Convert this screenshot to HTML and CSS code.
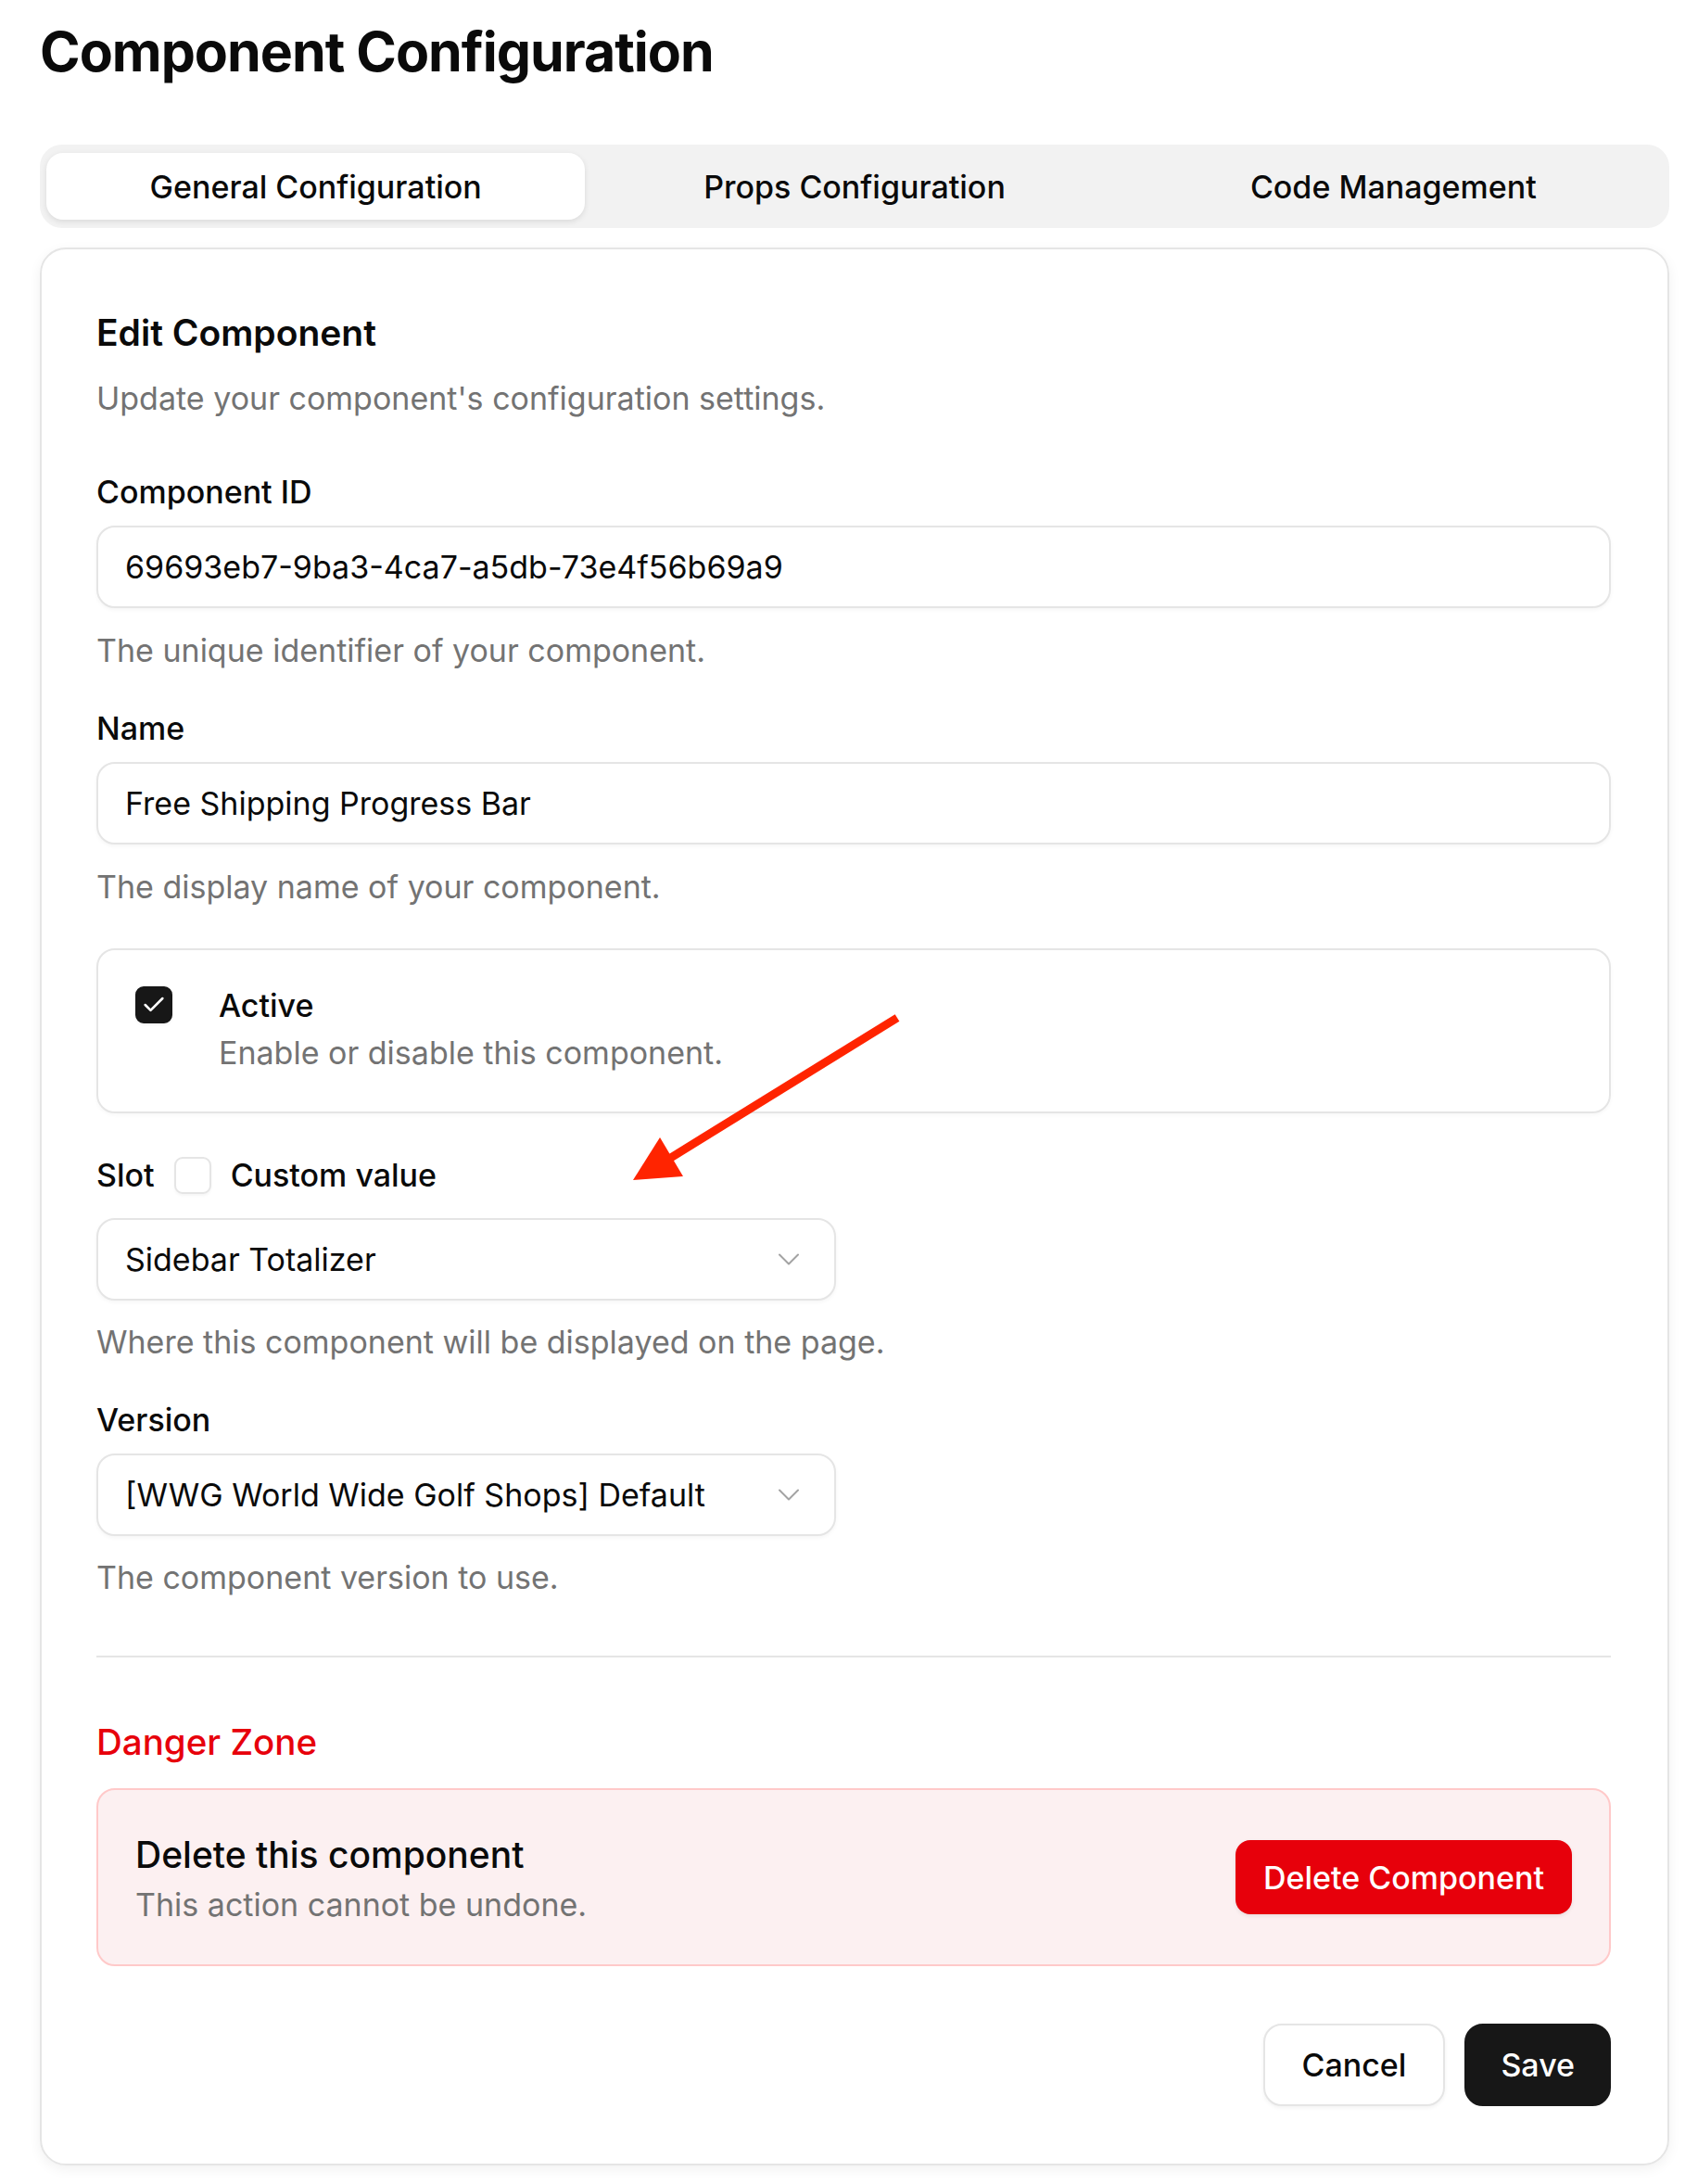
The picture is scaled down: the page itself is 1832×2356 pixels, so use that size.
FILE: index.html
```html
<!DOCTYPE html>
<html lang="en">
<head>
<meta charset="UTF-8">
<meta name="viewport" content="width=device-width, initial-scale=1.0">
<title>Component Configuration</title>
<link rel="stylesheet" href="styles.css">
</head>
<body>
<div class="page">
  <h1 class="title">Component Configuration</h1>

  <div class="tabs">
    <button type="button" class="tab active">General Configuration</button>
    <button type="button" class="tab">Props Configuration</button>
    <button type="button" class="tab">Code Management</button>
  </div>

  <div class="card">
    <!-- annotation arrow drawn over the form -->
    <svg class="annotation" width="320" height="210" viewBox="0 0 320 210">
      <line x1="298" y1="13" x2="52" y2="165" stroke="#ff2400" stroke-width="9" />
      <polygon points="13,188 42,142 67,184" fill="#ff2400" />
    </svg>

    <h2 class="card-title">Edit Component</h2>
    <p class="card-desc">Update your component's configuration settings.</p>

    <div class="field first">
      <label class="label">Component ID</label>
      <input class="input" type="text" value="69693eb7-9ba3-4ca7-a5db-73e4f56b69a9" readonly>
      <p class="help">The unique identifier of your component.</p>
    </div>

    <div class="field">
      <label class="label">Name</label>
      <input class="input" type="text" value="Free Shipping Progress Bar" readonly>
      <p class="help">The display name of your component.</p>
    </div>

    <div class="toggle-box">
      <span class="checkbox checked">
        <svg width="28" height="28" viewBox="0 0 24 24" fill="none" stroke="#fff" stroke-width="2.2" stroke-linecap="round" stroke-linejoin="round"><path d="M20 6 9 17l-5-5"/></svg>
      </span>
      <div>
        <div class="toggle-label">Active</div>
        <div class="toggle-desc">Enable or disable this component.</div>
      </div>
    </div>

    <div class="field slot">
      <div class="slot-row">
        <label class="label inline">Slot</label>
        <span class="checkbox"></span>
        <span class="label inline">Custom value</span>
      </div>
      <button type="button" class="select">
        <span>Sidebar Totalizer</span>
        <svg width="22" height="13" viewBox="0 0 22 13" fill="none" stroke="#a3a3a3" stroke-width="2" stroke-linecap="round" stroke-linejoin="round"><path d="M1 1.5l10 10 10-10"/></svg>
      </button>
      <p class="help short">Where this component will be displayed on the page.</p>
    </div>

    <div class="field">
      <label class="label">Version</label>
      <button type="button" class="select">
        <span>[WWG World Wide Golf Shops] Default</span>
        <svg width="22" height="13" viewBox="0 0 22 13" fill="none" stroke="#a3a3a3" stroke-width="2" stroke-linecap="round" stroke-linejoin="round"><path d="M1 1.5l10 10 10-10"/></svg>
      </button>
      <p class="help short">The component version to use.</p>
    </div>

    <hr class="divider">

    <h3 class="danger-title">Danger Zone</h3>
    <div class="danger-box">
      <div>
        <div class="danger-name">Delete this component</div>
        <div class="danger-note">This action cannot be undone.</div>
      </div>
      <button type="button" class="btn-danger">Delete Component</button>
    </div>

    <div class="actions">
      <button type="button" class="btn btn-outline">Cancel</button>
      <button type="button" class="btn btn-primary">Save</button>
    </div>
  </div>
</div>
</body>
</html>
```

FILE: styles.css
```css
body {
  margin: 0;
  font-family: Inter, "Noto Sans", sans-serif;
  color: #0a0a0a;
  background: #fff;
}

.page {
  padding: 20px 31px 20px 43px;
}

.title {
  margin: 0;
  font-size: 59px;
  line-height: 72px;
  font-weight: 700;
  letter-spacing: -1px;
}

/* tabs */
.tabs {
  margin-top: 64px;
  display: grid;
  grid-template-columns: repeat(3, 1fr);
  padding: 9px 7px;
  background: #f2f2f2;
  border-radius: 24px;
}
.tab {
  height: 72px;
  border: none;
  background: transparent;
  font-family: inherit;
  font-size: 34px;
  font-weight: 500;
  color: #0a0a0a;
  border-radius: 18px;
}
.tab.active {
  background: #fff;
  box-shadow: 0 2px 6px rgba(0, 0, 0, 0.1);
}

/* card */
.card {
  position: relative;
  margin-top: 21px;
  border: 2px solid #e5e5e5;
  border-radius: 28px;
  padding: 66px 61px 62px 59px;
  box-shadow: 0 4px 14px rgba(0, 0, 0, 0.06);
}
.annotation {
  position: absolute;
  left: 625px;
  top: 816px;
}
.card-title {
  margin: 0;
  font-size: 39px;
  line-height: 48px;
  font-weight: 600;
}
.card-desc {
  margin: 23px 0 0;
  font-size: 34px;
  line-height: 48px;
  color: #737373;
}

/* form fields */
.field {
  display: flex;
  flex-direction: column;
  align-items: flex-start;
  margin-top: 40px;
}
.field.first {
  margin-top: 57px;
}
.field.slot {
  margin-top: 47px;
}
.label {
  font-size: 34px;
  line-height: 40px;
  font-weight: 500;
  margin-bottom: 16px;
}
.label.inline {
  margin-bottom: 0;
}
.input {
  box-sizing: border-box;
  width: 100%;
  height: 89px;
  border: 2px solid #e5e5e5;
  border-radius: 20px;
  padding: 0 29px;
  font-family: inherit;
  font-size: 34px;
  color: #0a0a0a;
  background: #fff;
  box-shadow: 0 2px 4px rgba(0, 0, 0, 0.04);
  outline: none;
}
.help {
  margin: 22px 0 0;
  font-size: 34px;
  line-height: 48px;
  color: #737373;
}
.help.short {
  margin-top: 21px;
}

.toggle-box {
  margin-top: 42px;
  display: flex;
  align-items: flex-start;
  gap: 50px;
  border: 2px solid #e5e5e5;
  border-radius: 20px;
  padding: 39px 40px;
  box-shadow: 0 2px 4px rgba(0, 0, 0, 0.03);
}
.checkbox {
  box-sizing: border-box;
  width: 40px;
  height: 40px;
  flex-shrink: 0;
  border: 2px solid #e5e5e5;
  border-radius: 9px;
  display: flex;
  align-items: center;
  justify-content: center;
  background: #fff;
  box-shadow: 0 2px 3px rgba(0, 0, 0, 0.04);
}
.checkbox.checked {
  background: #171717;
  border-color: #171717;
}
.toggle-label {
  font-size: 34px;
  line-height: 42px;
  margin-bottom: 6px;
  font-weight: 500;
}
.toggle-desc {
  font-size: 34px;
  line-height: 48px;
  color: #737373;
}

.slot-row {
  display: flex;
  align-items: center;
  gap: 21px;
  margin-bottom: 26px;
}
.select {
  box-sizing: border-box;
  width: 798px;
  height: 89px;
  display: flex;
  align-items: center;
  justify-content: space-between;
  border: 2px solid #e5e5e5;
  border-radius: 20px;
  padding: 0 38px 0 29px;
  background: #fff;
  font-family: inherit;
  font-size: 34px;
  color: #0a0a0a;
  box-shadow: 0 2px 4px rgba(0, 0, 0, 0.04);
}

.divider {
  margin: 60px 0 0;
  border: none;
  border-top: 2px solid #e5e5e5;
}

/* danger zone */
.danger-title {
  margin: 67px 0 0;
  font-size: 38.5px;
  line-height: 48px;
  font-weight: 500;
  color: #e7000b;
}
.danger-box {
  margin-top: 26px;
  display: flex;
  align-items: center;
  justify-content: space-between;
  border: 2px solid #ffc9c9;
  background: #fcf0f1;
  border-radius: 20px;
  padding: 40px;
}
.danger-name {
  font-size: 39px;
  line-height: 60px;
  font-weight: 500;
}
.danger-note {
  font-size: 34px;
  line-height: 48px;
  color: #737373;
}
.btn-danger {
  height: 80px;
  padding: 0 30px;
  border: none;
  border-radius: 16px;
  background: #e7000b;
  color: #fff;
  font-family: inherit;
  font-size: 34px;
  font-weight: 500;
  box-shadow: 0 2px 4px rgba(0, 0, 0, 0.08);
}

.actions {
  display: flex;
  justify-content: flex-end;
  gap: 21px;
  margin-top: 62px;
}
.btn {
  height: 89px;
  padding: 0 40px;
  border-radius: 20px;
  font-family: inherit;
  font-size: 34px;
  font-weight: 500;
}
.btn-outline {
  background: #fff;
  color: #0a0a0a;
  border: 2px solid #e5e5e5;
  box-shadow: 0 2px 4px rgba(0, 0, 0, 0.05);
}
.btn-primary {
  padding: 0 37px;
  background: #171717;
  color: #fff;
  border: 2px solid #171717;
}
```
